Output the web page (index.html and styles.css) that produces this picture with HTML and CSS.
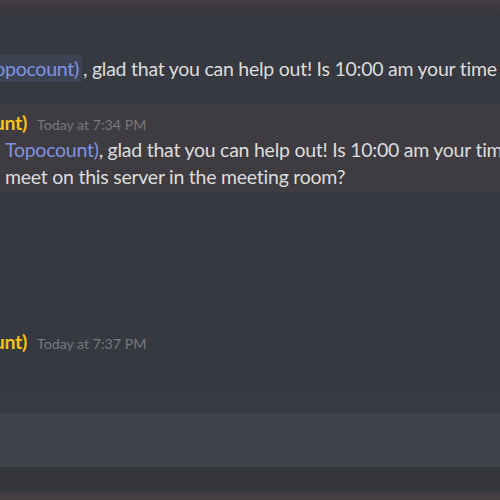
FILE: index.html
```html
<!DOCTYPE html>
<html>
<head>
<meta charset="utf-8">
<link rel="stylesheet" href="styles.css">
</head>
<body>
<div class="app">
  <div class="topbar"></div>
  <div class="chat">
    <div class="line first">
      <span class="clip mention-clip"><span class="mention boxed">@Topocount)</span></span><span class="text">, glad that you can help out! Is 10:00 am your time to</span>
    </div>
    <div class="msg highlighted">
      <div class="header">
        <span class="clip name-clip"><span class="name">(Topocount)</span></span>
        <span class="stamp">Today at 7:34 PM</span>
      </div>
      <div class="body">
        <div class="line"><span class="mention">Topocount)</span>, glad that you can help out! Is 10:00 am your time to</div>
        <div class="line">meet on this server in the meeting room?</div>
      </div>
    </div>
    <div class="msg last">
      <div class="header">
        <span class="clip name-clip"><span class="name">(Topocount)</span></span>
        <span class="stamp">Today at 7:37 PM</span>
      </div>
    </div>
  </div>
  <div class="composer">
    <div class="composer-top"></div>
    <div class="input"></div>
    <div class="composer-bottom"></div>
    <div class="bottombar"></div>
  </div>
</div>
</body>
</html>
```
FILE: styles.css
```css
html, body {
  margin: 0;
  padding: 0;
  background: #36393f;
}
.app {
  width: 500px;
  height: 500px;
  overflow: hidden;
  display: flex;
  flex-direction: column;
  font-family: Lato, "Open Sans", sans-serif;
  color: #dcddde;
  background: #36393f;
}
.topbar {
  height: 14px;
  flex: none;
  background: linear-gradient(#463e42 0px, #3f3b40 6px, #36393f 14px);
}
.chat {
  flex: 1;
  display: flex;
  flex-direction: column;
}
.line {
  font-size: 19.5px;
  line-height: 27px;
  letter-spacing: -0.25px;
  white-space: nowrap;
  overflow: hidden;
  display: flex;
  align-items: center;
}
.first {
  margin-top: 41px;
  height: 27px;
}
.clip {
  display: inline-flex;
  justify-content: flex-end;
  overflow: hidden;
  flex: none;
}
.mention-clip {
  width: 82px;
}
.mention {
  color: #7f93e2;
}
.boxed {
  background: rgba(114, 137, 218, 0.12);
  border-radius: 3px;
  padding: 0 3px 0 2px;
  line-height: 28px;
}
.text {
  margin-left: 1px;
}
.msg.highlighted {
  margin-top: 22px;
  background: #3e3c41;
  padding: 5px 0 2px 0;
}
.header {
  display: flex;
  align-items: baseline;
  height: 27px;
  line-height: 27px;
}
.name-clip {
  width: 27px;
}
.name {
  color: #f8c31a;
  font-weight: 700;
  font-size: 19.5px;
  letter-spacing: -0.3px;
  white-space: nowrap;
}
.stamp {
  margin-left: 10px;
  font-size: 14.2px;
  color: #75787f;
}
.body {
  padding-left: 5px;
}
.body .line {
  display: block;
}
.msg.last {
  margin-top: 136px;
}
.composer {
  flex: none;
  display: flex;
  flex-direction: column;
}
.composer-top {
  height: 19px;
  background: #383b41;
}
.input {
  height: 54px;
  background: #40434b;
}
.composer-bottom {
  height: 23px;
  background: #34363c;
}
.bottombar {
  height: 10px;
  background: linear-gradient(#34363c, #4a4045 60%, #433d42);
}
```
